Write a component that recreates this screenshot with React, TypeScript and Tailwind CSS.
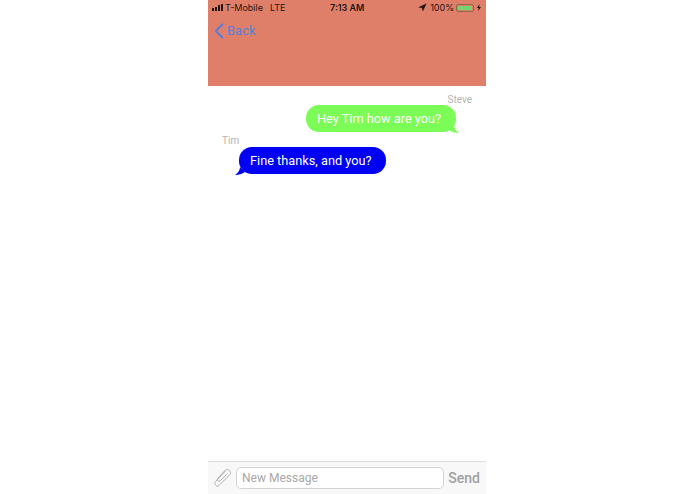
import React from 'react';
import { ChevronLeft, Navigation } from 'lucide-react';

const StatusBar = () => (
  <div className="flex items-center h-[15px] pl-[4px] pr-[4px] text-[9px] text-[#1f1512] relative font-['Inter',sans-serif]">
    <div className="flex items-end gap-[1px] h-[7px] mr-[2px]">
      <div className="w-[2px] h-[3px] bg-[#1f1512]" />
      <div className="w-[2px] h-[4px] bg-[#1f1512]" />
      <div className="w-[2px] h-[6px] bg-[#1f1512]" />
      <div className="w-[2px] h-[7px] bg-[#1f1512]" />
    </div>
    <span>T-Mobile</span>
    <span className="ml-[7px]">LTE</span>
    <span className="flex-1" />
    <Navigation size={9} className="fill-[#1f1512] mr-[3px]" strokeWidth={1} />
    <span>100%</span>
    <div className="ml-[2px] w-[18px] h-[8px] border border-[#8a6a4a] rounded-[2px] p-[1px]">
      <div className="w-full h-full bg-[#75d46e] rounded-[1px]" />
    </div>
    <svg width="6" height="7" viewBox="0 0 6 7" className="ml-[2px]">
      <path d="M3.5 0 L1 4 H2.7 L2.2 7 L5 3 H3.2 Z" fill="#1f1512" />
    </svg>
    <span className="absolute left-[122px] font-semibold">7:13 AM</span>
  </div>
);

const Outgoing = () => (
  <div className="flex flex-col items-end pr-[14px] pt-[8px]">
    <span className="text-[10px] text-[#b4b4b4] leading-[11px]">Steve</span>
    <div className="relative mr-[16px] h-[27px] w-[150px] pl-[11px] flex items-center rounded-[13px] bg-[#7cfc56] text-white text-[12.75px]">
      Hey Tim how are you?
      <svg width="10" height="8" viewBox="0 0 10 8" className="absolute right-[-3px] bottom-[-1px]">
        <path d="M5 0 C5 3 7 6 10 8 C6 8 3 7 0 5 Z" fill="#7cfc56" />
      </svg>
    </div>
  </div>
);

const Incoming = () => (
  <div className="flex flex-col items-start pl-[14px] mt-[3px]">
    <span className="text-[10px] text-[#b4b4b4] leading-[11px]">Tim</span>
    <div className="relative ml-[17px] mt-[1px] h-[27px] w-[147px] pl-[11px] flex items-center rounded-[13px] bg-[#0000f5] text-white text-[12.75px]">
      Fine thanks, and you?
      <svg width="10" height="8" viewBox="0 0 10 8" className="absolute left-[-4px] bottom-[-1px]">
        <path d="M5 0 C5 3 3 6 0 8 C4 8 7 7 10 5 Z" fill="#0000f5" />
      </svg>
    </div>
  </div>
);

export default function App() {
  return (
    <div className="font-['Roboto',sans-serif] w-[695px] h-[494px] bg-white pl-[208px]">
      <div className="w-[278px] h-full flex flex-col">
        <div className="h-[86px] bg-[#e07f69] shrink-0">
          <StatusBar />
          <div className="flex items-center mt-[3px] text-[#5b7fd6] text-[13px]">
            <ChevronLeft size={26} strokeWidth={2} className="-ml-[2px] -mr-[5px]" />
            <span>Back</span>
          </div>
        </div>
        <div className="flex-1">
          <Outgoing />
          <Incoming />
        </div>
        <div className="h-[33px] bg-[#f8f8f8] border-t border-[#dedede] flex items-center pl-[5px] pr-[6px] shrink-0">
          <svg width="19" height="20" viewBox="0 0 19 20" fill="none" stroke="#b0b0b0" strokeWidth="1" className="shrink-0">
            <path d="M12.5 3 L2.5 13.5 C0.5 16 3.5 19.5 6 17.5 L17 6.5 C19 4 15.5 0 12.5 2 L4.5 10.5 C3.5 12.5 5.5 14 7 13 L14.5 5.5" />
          </svg>
          <div className="ml-[4px] w-[208px] h-[22px] bg-white border border-[#d4d4d4] rounded-[5px] flex items-center pl-[5px] text-[12px] text-[#a8a8a8]">
            New Message
          </div>
          <span className="ml-auto text-[14px] font-medium text-[#a0a0a0]">Send</span>
        </div>
      </div>
    </div>
  );
}
